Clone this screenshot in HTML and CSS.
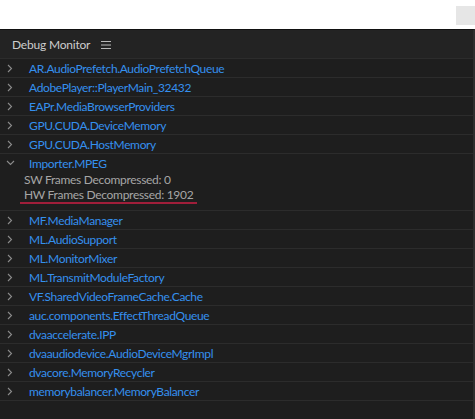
FILE: index.html
```html
<!DOCTYPE html>
<html>
<head>
<meta charset="utf-8">
<link rel="stylesheet" href="styles.css">
</head>
<body>
<div class="topbar"><div class="corner"></div></div>
<div class="panel">
  <div class="header">
    <span class="title">Debug Monitor</span>
    <svg class="menu" width="10" height="8" viewBox="0 0 10 8"><path d="M0 0.5H10M0 4H10M0 7.5H10" stroke="#b8b8b8" stroke-width="1"/></svg>
  </div>
  <div class="list">
    <div class="row"><svg class="chev" width="6" height="9" viewBox="0 0 6 9"><path d="M1 1L4.5 4.5L1 8" fill="none" stroke="#8c8c8c" stroke-width="1.1"/></svg><span class="name">AR.AudioPrefetch.AudioPrefetchQueue</span></div>
    <div class="row"><svg class="chev" width="6" height="9" viewBox="0 0 6 9"><path d="M1 1L4.5 4.5L1 8" fill="none" stroke="#8c8c8c" stroke-width="1.1"/></svg><span class="name">AdobePlayer::PlayerMain_32432</span></div>
    <div class="row"><svg class="chev" width="6" height="9" viewBox="0 0 6 9"><path d="M1 1L4.5 4.5L1 8" fill="none" stroke="#8c8c8c" stroke-width="1.1"/></svg><span class="name">EAPr.MediaBrowserProviders</span></div>
    <div class="row"><svg class="chev" width="6" height="9" viewBox="0 0 6 9"><path d="M1 1L4.5 4.5L1 8" fill="none" stroke="#8c8c8c" stroke-width="1.1"/></svg><span class="name">GPU.CUDA.DeviceMemory</span></div>
    <div class="row"><svg class="chev" width="6" height="9" viewBox="0 0 6 9"><path d="M1 1L4.5 4.5L1 8" fill="none" stroke="#8c8c8c" stroke-width="1.1"/></svg><span class="name">GPU.CUDA.HostMemory</span></div>
    <div class="group">
      <div class="row open"><svg class="down" width="9" height="6" viewBox="0 0 9 6"><path d="M1 1L4.5 4.5L8 1" fill="none" stroke="#8c8c8c" stroke-width="1.1"/></svg><span class="name">Importer.MPEG</span></div>
      <div class="detail">SW Frames Decompressed: 0</div>
      <div class="detail marked">HW Frames Decompressed: 1902</div>
    </div>
    <div class="row"><svg class="chev" width="6" height="9" viewBox="0 0 6 9"><path d="M1 1L4.5 4.5L1 8" fill="none" stroke="#8c8c8c" stroke-width="1.1"/></svg><span class="name">MF.MediaManager</span></div>
    <div class="row"><svg class="chev" width="6" height="9" viewBox="0 0 6 9"><path d="M1 1L4.5 4.5L1 8" fill="none" stroke="#8c8c8c" stroke-width="1.1"/></svg><span class="name">ML.AudioSupport</span></div>
    <div class="row"><svg class="chev" width="6" height="9" viewBox="0 0 6 9"><path d="M1 1L4.5 4.5L1 8" fill="none" stroke="#8c8c8c" stroke-width="1.1"/></svg><span class="name">ML.MonitorMixer</span></div>
    <div class="row"><svg class="chev" width="6" height="9" viewBox="0 0 6 9"><path d="M1 1L4.5 4.5L1 8" fill="none" stroke="#8c8c8c" stroke-width="1.1"/></svg><span class="name">ML.TransmitModuleFactory</span></div>
    <div class="row"><svg class="chev" width="6" height="9" viewBox="0 0 6 9"><path d="M1 1L4.5 4.5L1 8" fill="none" stroke="#8c8c8c" stroke-width="1.1"/></svg><span class="name">VF.SharedVideoFrameCache.Cache</span></div>
    <div class="row"><svg class="chev" width="6" height="9" viewBox="0 0 6 9"><path d="M1 1L4.5 4.5L1 8" fill="none" stroke="#8c8c8c" stroke-width="1.1"/></svg><span class="name">auc.components.EffectThreadQueue</span></div>
    <div class="row"><svg class="chev" width="6" height="9" viewBox="0 0 6 9"><path d="M1 1L4.5 4.5L1 8" fill="none" stroke="#8c8c8c" stroke-width="1.1"/></svg><span class="name">dvaaccelerate.IPP</span></div>
    <div class="row"><svg class="chev" width="6" height="9" viewBox="0 0 6 9"><path d="M1 1L4.5 4.5L1 8" fill="none" stroke="#8c8c8c" stroke-width="1.1"/></svg><span class="name">dvaaudiodevice.AudioDeviceMgrImpl</span></div>
    <div class="row"><svg class="chev" width="6" height="9" viewBox="0 0 6 9"><path d="M1 1L4.5 4.5L1 8" fill="none" stroke="#8c8c8c" stroke-width="1.1"/></svg><span class="name">dvacore.MemoryRecycler</span></div>
    <div class="row"><svg class="chev" width="6" height="9" viewBox="0 0 6 9"><path d="M1 1L4.5 4.5L1 8" fill="none" stroke="#8c8c8c" stroke-width="1.1"/></svg><span class="name">memorybalancer.MemoryBalancer</span></div>
  </div>
</div>
</body>
</html>
```
FILE: styles.css
```css
html, body {
  margin: 0;
  padding: 0;
  background: #ffffff;
  width: 475px;
  height: 419px;
  overflow: hidden;
  font-family: Lato, "Open Sans", sans-serif;
}
.topbar {
  height: 29px;
  display: flex;
  justify-content: flex-end;
  align-items: flex-start;
}
.corner {
  width: 19px;
  height: 19px;
  margin-top: 6px;
  background: #e6e6e6;
}
.panel {
  height: 390px;
  background: #1e1e1e;
  border-top: 1px solid #111111;
  border-right: 2px solid #2e2e2e;
  box-sizing: border-box;
}
.header {
  height: 28px;
  background: #232323;
  display: flex;
  align-items: center;
  padding-left: 12px;
  box-sizing: border-box;
}
.title {
  color: #cdcdcd;
  font-size: 12px;
  letter-spacing: -0.2px;
}
.menu {
  margin-left: 11px;
  margin-top: 1px;
}
.list {
  border-top: 1px solid #2c2c2c;
}
.row {
  height: 18px;
  display: flex;
  align-items: center;
  border-bottom: 1px solid #2c2c2c;
}
.group {
  height: 56px;
  border-bottom: 1px solid #2c2c2c;
}
.group .row {
  border-bottom: none;
}
.chev {
  margin-left: 7px;
  margin-right: 16px;
  flex: none;
}
.down {
  margin-left: 6px;
  margin-right: 14px;
  flex: none;
}
.name {
  color: #3590ee;
  font-size: 12px;
  letter-spacing: -0.35px;
}
.detail {
  color: #a6a6a6;
  font-size: 12px;
  letter-spacing: -0.3px;
  padding-left: 24px;
  height: 15px;
  line-height: 15px;
  white-space: nowrap;
}
.detail.marked {
  width: fit-content;
  padding-left: 4px;
  padding-right: 4px;
  margin-left: 20px;
  border-bottom: 2px solid #a01e3a;
}
```
